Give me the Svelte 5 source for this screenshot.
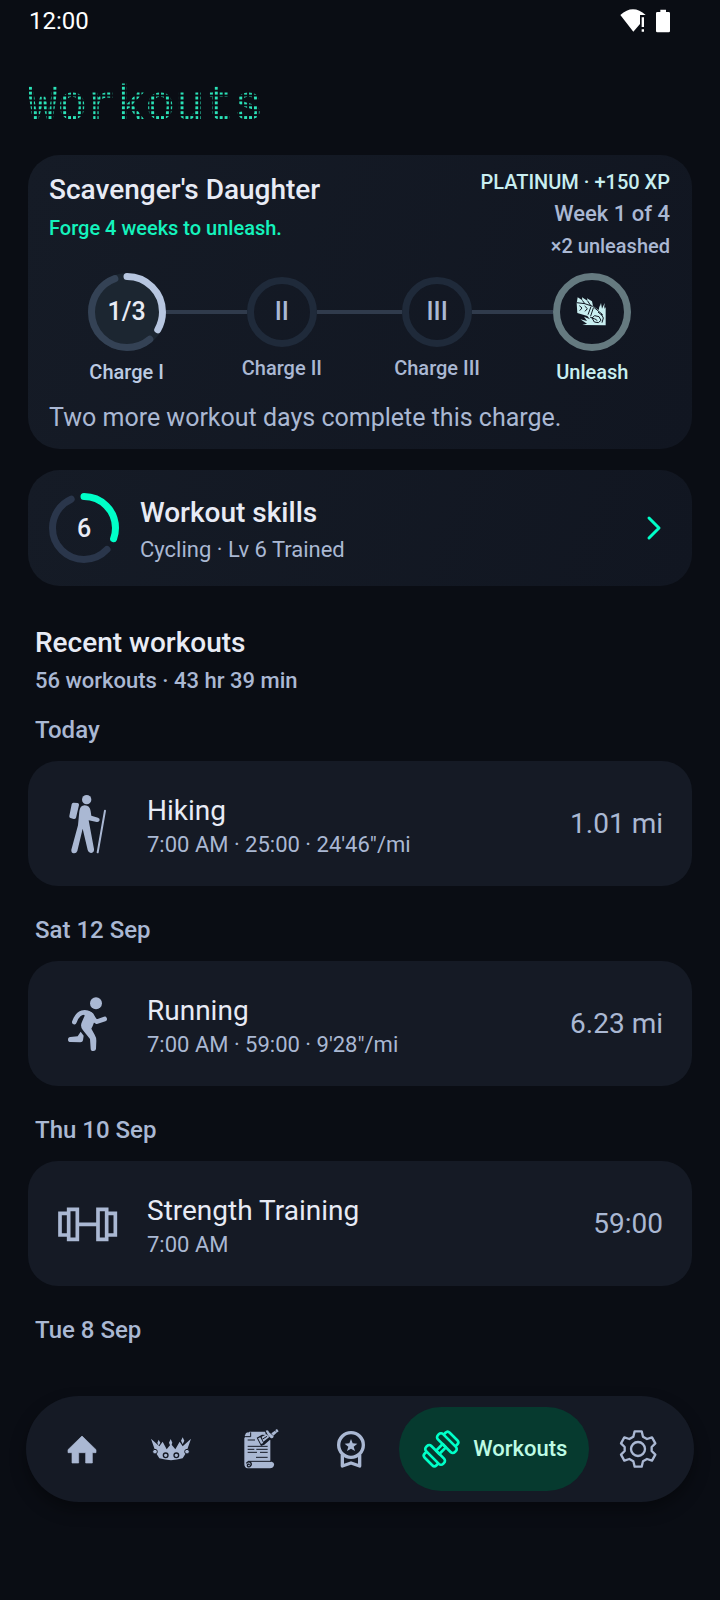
<script lang="ts">
	interface Stage {
		mark: string;
		label: string;
		state: 'active' | 'locked' | 'reward';
	}

	interface Workout {
		kind: 'hiking' | 'running' | 'strength';
		name: string;
		details: string;
		value: string;
	}

	interface Day {
		label: string;
		workouts: Workout[];
	}

	const stages: Stage[] = [
		{ mark: '1/3', label: 'Charge I', state: 'active' },
		{ mark: 'II', label: 'Charge II', state: 'locked' },
		{ mark: 'III', label: 'Charge III', state: 'locked' },
		{ mark: '', label: 'Unleash', state: 'reward' }
	];

	const days: Day[] = [
		{
			label: 'Today',
			workouts: [{ kind: 'hiking', name: 'Hiking', details: `7:00 AM · 25:00 · 24'46"/mi`, value: '1.01 mi' }]
		},
		{
			label: 'Sat 12 Sep',
			workouts: [{ kind: 'running', name: 'Running', details: `7:00 AM · 59:00 · 9'28"/mi`, value: '6.23 mi' }]
		},
		{
			label: 'Thu 10 Sep',
			workouts: [{ kind: 'strength', name: 'Strength Training', details: '7:00 AM', value: '59:00' }]
		},
		{ label: 'Tue 8 Sep', workouts: [] }
	];
</script>

<!-- angles are degrees clockwise from 12 o'clock -->
{#snippet ring(size: number, progress: number, from: number, to: number)}
	<svg class="ring" width={size} height={size} viewBox="0 0 {size} {size}" aria-hidden="true">
		<g transform="rotate(-90 {size / 2} {size / 2})" fill="none" stroke-width="7" stroke-linecap="round">
			<circle class="ring-track" cx={size / 2} cy={size / 2} r={size / 2 - 3.5} pathLength="360" stroke-dasharray="{to - from} 360" stroke-dashoffset={-from} />
			<circle class="ring-value" cx={size / 2} cy={size / 2} r={size / 2 - 3.5} pathLength="360" stroke-dasharray="{progress} 360" />
		</g>
	</svg>
{/snippet}

{#snippet gauntlet()}
	<svg width="32" height="32" viewBox="56 50 96 96" aria-hidden="true">
		<g fill="currentColor">
			<path d="M58 72l3-18 14 9-1-9 17 11-2-8 15 9 3 14 17 13 7-22 3 17 8-17-2 18 5-5v54l-70-1 14-4-20-13 20 5-9-13 18 8-8-10-30-9z" />
		</g>
		<g fill="none" stroke="#111722" stroke-width="3">
			<path d="M58 70l24 3 24 8 30 25M66 79l8 7-7 8M82 80l8 8-7 8M101 82l-9 24M108 86l-8 24M75 63l8 11M91 65l10 15M98 113l14 6M122 98l12 10" />
			<path d="M104 116l8-7 13 3 6 11-8 7-12-2zM112 118l8 6M132 104l6 12-4 14" />
		</g>
		<path d="M124 92l4-14 3 20 10-15 1 20z" fill="currentColor" />
	</svg>
{/snippet}

{#snippet workoutIcon(kind: Workout['kind'])}
	<svg class="workout-icon" viewBox="54 42 180 180" fill="currentColor" aria-hidden="true">
		{#if kind === 'hiking'}
			<circle cx="140" cy="59" r="14" />
			<path d="M100 68l13 1q5 1 4 6l-9 38q-2 5-7 4l-10-3q-4-1-3-6l7-35q1-5 5-5z" />
			<path d="M134 76q16 0 18 18l2 13 20 6q6 2 5 8-2 6-9 5l-24-5 16 86q1 10-8 12-8 1-11-9l-15-64-16 67q-3 8-11 7-8-2-7-11l20-73 4-42q2-18 16-18z" />
			<path d="M195 92l-22 125" fill="none" stroke="currentColor" stroke-width="6" stroke-linecap="round" />
		{:else if kind === 'running'}
			<circle cx="168" cy="70" r="18" />
			<path d="M103 126q9-24 23-28 14-3 23 4 9 8 14 18l8 5 23-8" fill="none" stroke="currentColor" stroke-width="14" stroke-linecap="round" stroke-linejoin="round" />
			<path d="M128 95q28-7 35 12 4 12-5 31l-4 8 10 18q5 8 5 18l-1 25q-1 6-8 6-8 0-8-7l-2-29-21-26q-10-12-3-26l8-18z" />
			<path d="M122 155l9 12-2 14q-1 6-8 6l-29-1q-8 0-8-7 0-8 7-8l22-2z" />
		{:else}
			<g fill="none" stroke="currentColor" stroke-width="11">
				<path d="M86 100H60v65h26M200 100h26v65h-26M112 133h62" />
				<path d="M86 88h26v90H86zM174 88h26v90h-26z" />
			</g>
		{/if}
	</svg>
{/snippet}

<div class="screen">
	<div class="status">
		<span>12:00</span>
		<span class="status-icons">
			<svg width="26" height="24" viewBox="89 26 78 72" fill="#fff" aria-label="Wi-Fi, no internet" role="img">
				<path d="M90 44q38-34 76 0h-17v27l-20 23z" />
				<path d="M154 51h7v29h-7zM154 87h7v7h-7z" />
			</svg>
			<svg width="14" height="24" viewBox="198 26 42 72" fill="#fff" aria-label="Battery full" role="img">
				<path d="M211 28h17v7h8q4 0 4 4v53q0 4-4 4h-34q-4 0-4-4V39q0-4 4-4h9z" />
			</svg>
		</span>
	</div>

	<main>
		<h1>Workouts</h1>

		<section class="card quest">
			<div class="quest-head">
				<div class="quest-title">
					<h2>Scavenger's Daughter</h2>
					<p class="hint">Forge 4 weeks to unleash.</p>
				</div>
				<div class="quest-meta">
					<p class="tier">PLATINUM · +150 XP</p>
					<p class="week">Week 1 of 4</p>
					<p class="count">×2 unleashed</p>
				</div>
			</div>

			<ol class="stages">
				{#each stages as stage}
					<li class="stage stage--{stage.state}">
						<div class="stage-row">
							<span class="link"></span>
							<span class="node">
								{#if stage.state === 'active'}
									{@render ring(78, 120, 140, 340)}
								{/if}
								{#if stage.state === 'reward'}
									{@render gauntlet()}
								{:else}
									<span class="mark">{stage.mark}</span>
								{/if}
							</span>
							<span class="link"></span>
						</div>
						<span class="stage-label">{stage.label}</span>
					</li>
				{/each}
			</ol>

			<p class="note">Two more workout days complete this charge.</p>
		</section>

		<button class="card skills" type="button">
			<span class="level">
				{@render ring(70, 110, 133, 336)}
				<span class="mark">6</span>
			</span>
			<span class="skills-text">
				<span class="skills-title">Workout skills</span>
				<span class="skills-sub">Cycling · Lv 6 Trained</span>
			</span>
			<svg class="chevron" width="16" height="26" viewBox="0 0 16 26" aria-hidden="true">
				<path d="M3 3l10 10L3 23" fill="none" stroke="currentColor" stroke-width="3" stroke-linecap="round" stroke-linejoin="round" />
			</svg>
		</button>

		<section class="recent">
			<h2>Recent workouts</h2>
			<p class="total">56 workouts · 43 hr 39 min</p>

			<div class="days">
				{#each days as day}
					<div class="day">
						<h3>{day.label}</h3>
						{#each day.workouts as workout}
							<article class="workout">
								{@render workoutIcon(workout.kind)}
								<div class="workout-text">
									<h4>{workout.name}</h4>
									<p>{workout.details}</p>
								</div>
								<span class="workout-value">{workout.value}</span>
							</article>
						{/each}
					</div>
				{/each}
			</div>
		</section>
	</main>

	<nav>
		<a href="#home" aria-label="Home">
			<svg viewBox="130 147 120 120" fill="currentColor" aria-hidden="true">
				<path d="M190 168l42 41v9h-11v31h-20v-31h-21v31h-20v-31h-12v-9z" stroke="currentColor" stroke-width="2" stroke-linejoin="round" />
			</svg>
		</a>
		<a href="#ranks" aria-label="Ranks">
			<svg viewBox="398 147 120 120" fill="currentColor" aria-hidden="true">
				<path d="M398 176l25 23 10-14 12 23 13-16 13 16 13-23 9 14 25-23-11 32h-3v14h-3l-8 13q-35 11-70 0l-8-13h-3v-14h-3z" />
				<path d="M421 179l5 9-5 9-4-9zM457 177l5 11-5 12-5-12zM493 172l5 10-5 11-5-11z" />
				<g fill="none" stroke="#151a25" stroke-width="4">
					<circle cx="442" cy="226" r="7" />
					<circle cx="474" cy="226" r="7" />
				</g>
				<g stroke="#151a25" stroke-width="3">
					<circle cx="410" cy="215" r="7" />
					<circle cx="506" cy="215" r="7" />
				</g>
			</svg>
		</a>
		<a href="#quests" aria-label="Quests">
			<svg viewBox="72 147 120 120" fill="currentColor" aria-hidden="true">
				<path d="M97 155h54l9 12v78h4q9 2 7 11-2 9-12 9H92q-10-1-10-13v-78z" />
				<path d="M83 168l4-9 8-3-2 10 7 3z" />
				<g fill="none" stroke="#151a25" stroke-width="3">
					<path d="M85 170h16v-13M92 180h22M92 199h60M92 208h20M118 208h34M92 217h28M129 217h23M117 232h35M93 244h69" />
					<path d="M88 250q6-8 13-3 5 7-3 13-7 2-7-5 3-5 7-1" stroke-width="4" />
				</g>
				<path d="M119 173l16-9 12 1-4-14 10-2 12 7 9-8 10 9-14 13 1 13-12-4-17 15-10 4z" fill="#151a25" />
				<path d="M123 175l7-3 9 17-7 3zM134 170l15-7 8 8-18 14zM146 152q8-4 10 5l14 12q-1 8-9 5l-8-8zM163 160l11-8 5 6-10 9zM175 150l5-3 5 7-6 4z" />
				<path d="M137 177l13-8" stroke="#151a25" stroke-width="3" />
			</svg>
		</a>
		<a href="#awards" aria-label="Awards">
			<svg viewBox="337 147 120 120" fill="currentColor" aria-hidden="true">
				<g fill="none" stroke="currentColor" stroke-width="10">
					<circle cx="397" cy="195" r="37" />
					<path d="M371 224v34l26-9 26 9v-34" stroke-linejoin="round" />
				</g>
				<path d="M397 177l5 13 14 1-11 9 4 13-12-7-12 7 4-13-11-9 14-1z" />
			</svg>
		</a>
		<a class="current" href="#workouts" aria-current="page">
			<svg viewBox="97 147 120 120" aria-hidden="true">
				<g transform="rotate(-45 157 207)" fill="none" stroke="currentColor" stroke-width="8" stroke-linejoin="round">
					<path d="M143 200h28v14h-28z" />
					<rect x="121" y="171" width="22" height="72" rx="9" />
					<rect x="171" y="171" width="22" height="72" rx="9" />
					<path d="M121 182h-8q-9 0-9 9v32q0 9 9 9h8M193 182h8q9 0 9 9v32q0 9-9 9h-8" />
				</g>
			</svg>
			<span>Workouts</span>
		</a>
		<a href="#settings" aria-label="Settings">
			<svg viewBox="685 147 120 120" fill="none" stroke="currentColor" stroke-width="7" stroke-linejoin="round" aria-hidden="true">
				<circle cx="745" cy="207" r="21" />
				<path d="M735 154h21l4 16 12 7 15-5 10 18-11 11v12l11 11-10 18-15-5-12 7-4 16h-21l-4-16-12-7-15 5-10-18 11-11v-12l-11-11 10-18 15 5 12-7z" />
			</svg>
		</a>
	</nav>
</div>

<style>
	:global(body) {
		margin: 0;
		background: #0a0d14;
	}

	.screen {
		--surface: #151a25;
		--text: #e8ebf5;
		--muted: #aab8d3;
		--accent: #00ffc8;
		--ice: #c8eef0;

		box-sizing: border-box;
		min-height: 100vh;
		padding-bottom: 98px;
		background: #0a0d14;
		color: var(--text);
		font-family: Roboto, 'Noto Sans', sans-serif;
		font-size: 20px;
		line-height: 28px;
	}

	h1, h2, h3, h4, p, ol { margin: 0; padding: 0; }

	.status {
		display: flex;
		justify-content: space-between;
		align-items: center;
		padding: 0 50px 0 29px;
		color: #fff;
		font-size: 24px;
		line-height: 42px;
	}

	.status-icons { display: flex; gap: 10px; }

	main { padding: 34px 28px 0; }

	/* dot-matrix lettering: six dots per monospace advance */
	h1 {
		width: fit-content;
		margin-bottom: 19px;
		font-family: 'Liberation Mono', monospace;
		font-size: 49px;
		font-weight: 400;
		line-height: 60px;
		color: transparent;
		background-image: radial-gradient(circle, #2be3b8 40%, transparent 52%);
		background-size: 0.1em 0.1em;
		background-clip: text;
		-webkit-background-clip: text;
		-webkit-text-stroke: 1px transparent;
	}

	h2 { font-size: 28px; font-weight: 500; line-height: 38px; }

	.card {
		border-radius: 32px;
		background: linear-gradient(110deg, #151b26, #111621);
	}

	.quest { padding: 13px 22px 15px 21px; }

	.quest-head { display: flex; justify-content: space-between; }

	.quest-title { padding-top: 3px; }

	.hint { margin-top: 5px; font-weight: 500; color: #14f3bd; }

	.quest-meta { text-align: right; font-weight: 500; color: var(--muted); }

	.tier { color: var(--ice); }

	.week { font-size: 22px; line-height: 36px; }

	.stages {
		display: grid;
		grid-template-columns: repeat(4, 1fr);
		align-items: center;
		margin-top: 13px;
		list-style: none;
	}

	.stage {
		display: flex;
		flex-direction: column;
		gap: 7px;
		text-align: center;
	}

	.stage-row { display: flex; align-items: center; }

	.link { flex: 1; height: 4px; background: #303b4c; }

	.stage:first-child .link:first-child,
	.stage:last-child .link:last-child { background: none; }

	.node, .level {
		display: grid;
		place-items: center;
		box-sizing: border-box;
		width: 70px;
		height: 70px;
		border-radius: 50%;
		font-size: 25px;
		font-weight: 500;
	}

	.node > :global(*), .level > :global(*) { grid-area: 1 / 1; }

	.node { border: 7px solid #1f2a3a; color: var(--muted); }

	.stage--active .node {
		width: 78px;
		height: 78px;
		border: 0;
		background: #1c2631;
		color: var(--text);
	}

	.stage--reward .node {
		width: 78px;
		height: 78px;
		border-color: #657a80;
		color: var(--ice);
	}

	.stage-label { font-weight: 500; color: var(--muted); }
	.stage--active .stage-label { color: #bccbe2; }
	.stage--reward .stage-label { color: var(--ice); }

	.ring-track { stroke: #344255; }
	.ring-value { stroke: #b7c6e0; }

	.note { margin-top: 16px; font-size: 25px; line-height: 32px; color: var(--muted); }

	.skills {
		display: flex;
		align-items: center;
		gap: 21px;
		width: 100%;
		margin-top: 21px;
		padding: 22px 30px 22px 21px;
		border: 0;
		color: var(--text);
		font-family: inherit;
		text-align: left;
	}

	.skills .ring-track { stroke: #2a364b; }
	.skills .ring-value { stroke: var(--accent); }

	.skills-text { display: flex; flex: 1; flex-direction: column; gap: 4px; padding-top: 2px; }

	.skills-title { font-size: 28px; font-weight: 500; line-height: 38px; }

	.skills-sub { font-size: 22px; line-height: 28px; color: var(--muted); }

	.chevron { color: var(--accent); }

	.recent { margin-top: 38px; }

	.recent h2, .total, h3 { padding-left: 7px; }

	.total { margin-top: 5px; font-size: 22px; font-weight: 500; color: var(--muted); }

	.days {
		display: flex;
		flex-direction: column;
		gap: 28px;
		margin-top: 19px;
	}

	h3 { font-size: 24px; font-weight: 500; line-height: 32px; color: var(--muted); }

	.workout {
		display: flex;
		align-items: center;
		gap: 29px;
		box-sizing: border-box;
		min-height: 125px;
		margin-top: 15px;
		padding: 24px 29px 24px 30px;
		border-radius: 30px;
		background: var(--surface);
	}

	.workout-icon { flex-shrink: 0; width: 60px; height: 60px; color: var(--muted); }

	.workout-text { flex: 1; padding-top: 6px; }

	h4 { font-size: 28px; font-weight: 400; line-height: 36px; }

	.workout-text p { font-size: 22px; line-height: 32px; color: var(--muted); }

	.workout-value { font-size: 28px; line-height: 36px; color: var(--muted); }

	nav {
		display: flex;
		align-items: center;
		box-sizing: border-box;
		height: 106px;
		margin: 50px 26px 0;
		padding: 0 11px;
		border-radius: 53px;
		background: var(--surface);
		box-shadow: 0 8px 16px rgba(0, 0, 0, 0.35);
	}

	nav a {
		display: flex;
		flex: 1;
		align-items: center;
		justify-content: center;
		height: 84px;
		border-radius: 42px;
		color: var(--muted);
		text-decoration: none;
	}

	nav svg { width: 40px; height: 40px; }

	nav .current {
		flex: none;
		gap: 12px;
		margin: 0 4px;
		padding: 0 22px;
		background: #063a2f;
		color: var(--accent);
	}

	.current span { font-size: 22px; font-weight: 500; color: #bdfbe4; }
</style>
